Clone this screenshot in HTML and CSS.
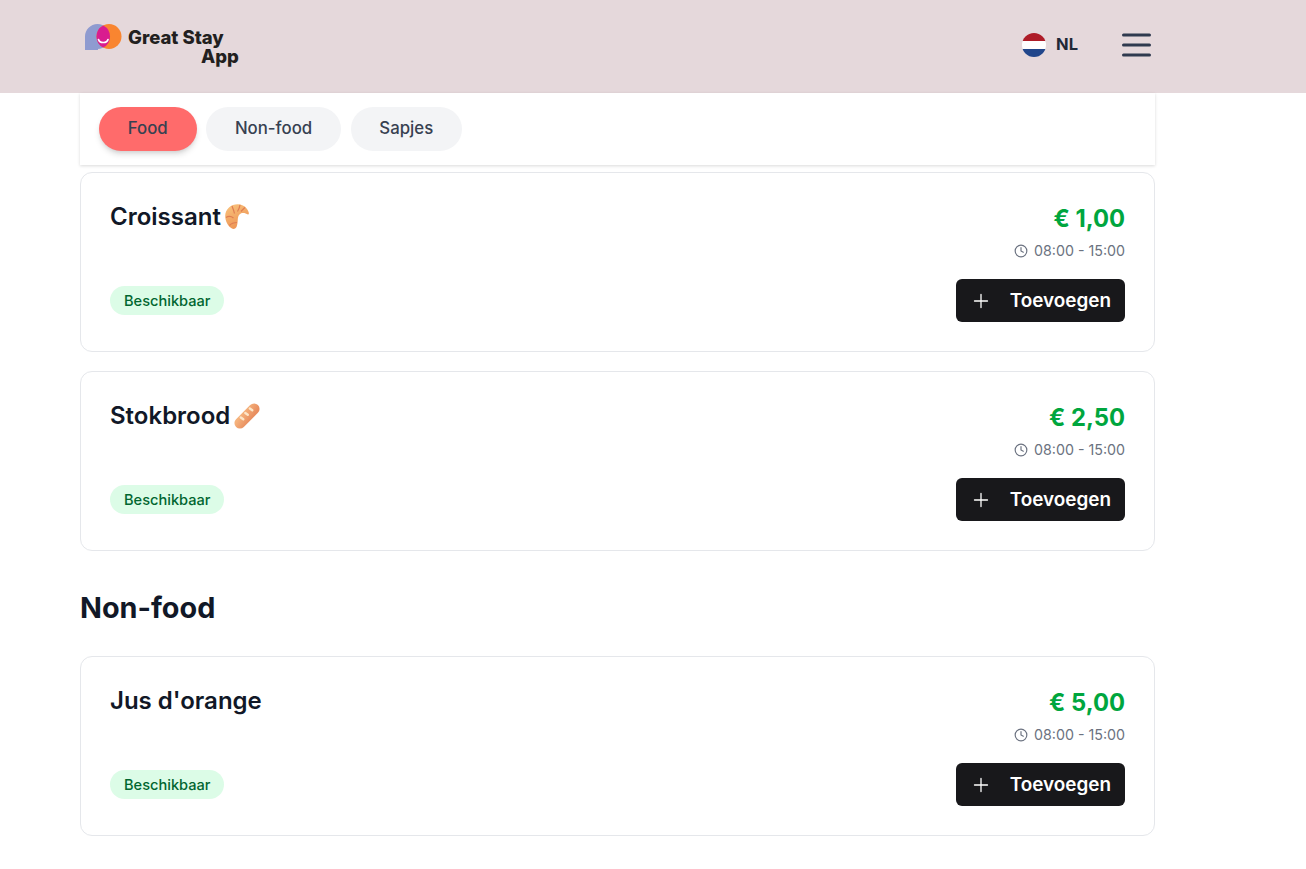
FILE: index.html
```html
<!DOCTYPE html>
<html lang="nl">
<head>
<meta charset="utf-8">
<title>Great Stay App</title>
<link rel="stylesheet" href="styles.css">
</head>
<body>
<header class="header">
  <div class="logo">
    <svg class="logo-mark" width="37" height="26" viewBox="0 0 37 26">
      <path d="M0 26V12.500C0 5.600 5.600 0 12.500 0C19.400 0 25 5.600 25 12.500C25 19.400 19.400 25 12.500 25L0 26Z" fill="#8f9bd0"/>
      <path d="M0 25H13V26H0Z" fill="#8f9bd0"/>
      <circle cx="24" cy="12.500" r="12.500" fill="#f98530"/>
      <path d="M18.250 1.400A12.500 12.500 0 0 1 18.250 23.600A12.500 12.500 0 0 1 18.250 1.400Z" fill="#d91c8f"/>
      <path d="M13.500 15.500C14.500 19.500 22 19.500 23 15.500" fill="none" stroke="#fff" stroke-width="1.700" stroke-linecap="round"/>
    </svg>
    <div class="logo-text"><span>Great Stay</span><span class="logo-app">App</span></div>
  </div>
  <div class="header-right">
    <div class="lang">
      <svg class="flag" width="24" height="24" viewBox="0 0 24 24">
        <clipPath id="flagclip"><circle cx="12" cy="12" r="12"/></clipPath>
        <g clip-path="url(#flagclip)">
          <rect width="24" height="8" fill="#ae1c28"/>
          <rect y="8" width="24" height="8" fill="#fff"/>
          <rect y="16" width="24" height="8" fill="#21468b"/>
        </g>
      </svg>
      <span class="lang-code">NL</span>
    </div>
    <svg class="burger" width="30" height="24" viewBox="0 0 30 24">
      <path d="M2.500 2H28.500M2.500 12H28.500M2.500 22H28.500" fill="none" stroke="#2f3a4f" stroke-width="3" stroke-linecap="round"/>
    </svg>
  </div>
</header>
<main class="page">
  <nav class="tabs">
    <button class="tab tab-active">Food</button>
    <button class="tab">Non-food</button>
    <button class="tab">Sapjes</button>
  </nav>
  <section class="list">
    <article class="card">
      <div class="card-top">
        <h3 class="name">Croissant
          <svg class="emoji" width="26" height="26" viewBox="0 0 26 26">
            <defs>
              <linearGradient id="crois" x1="0.200" y1="0" x2="0.700" y2="1">
                <stop offset="0" stop-color="#f9c27c"/>
                <stop offset="1" stop-color="#ec8f50"/>
              </linearGradient>
            </defs>
            <path d="M5 3.500C10 -1 19 -1 23 5C25 8 25.500 10.500 24 10.500C21 8.500 17 8 15 11C13 14 14.500 18 12.500 23C11 25.500 8.500 25.500 6.500 23.500C2 20 -2 9.500 5 3.500Z" fill="url(#crois)"/>
            <path d="M2 13.500C4.500 12 7.500 12.500 9.500 14M8 2C9 4.500 10 7 10.500 9.500M16 0.800C15.700 3 15 5 13.500 7.500M21 3.500C19.500 4.800 18.500 6 17 7.500M5.500 21.500C7 19.800 9.500 18.500 13 18.500" fill="none" stroke="#df7d52" stroke-width="1.200"/>
          </svg>
        </h3>
        <div class="meta">
          <div class="price">€ 1,00</div>
          <div class="time">
            <svg width="14" height="14" viewBox="0 0 24 24" fill="none" stroke="#6b7280" stroke-width="2" stroke-linecap="round" stroke-linejoin="round"><circle cx="12" cy="12" r="10"/><path d="M12 6v6l4 2"/></svg>
            <span>08:00 - 15:00</span>
          </div>
        </div>
      </div>
      <div class="card-bottom">
        <span class="badge">Beschikbaar</span>
        <button class="add">
          <svg width="16" height="16" viewBox="0 0 16 16"><path d="M8 1.500V14.500M1.500 8H14.500" stroke="#fff" stroke-width="1.300" stroke-linecap="round"/></svg>
          <span>Toevoegen</span>
        </button>
      </div>
    </article>
    <article class="card">
      <div class="card-top">
        <h3 class="name">Stokbrood
          <svg class="emoji" width="26" height="26" viewBox="0 0 26 26">
            <defs>
              <linearGradient id="brood" x1="0.300" y1="0.100" x2="0.700" y2="0.900">
                <stop offset="0" stop-color="#f5b27c"/>
                <stop offset="1" stop-color="#e88d5e"/>
              </linearGradient>
            </defs>
            <rect x="-2.500" y="7.500" width="31" height="11" rx="5.500" transform="rotate(-45 13 13)" fill="url(#brood)"/>
            <path d="M6.800 14.500L9.300 16.300M11.300 10L13.800 11.800M15.800 5.500L18.300 7.300" stroke="#fce6c8" stroke-width="2.400" stroke-linecap="round"/>
          </svg>
        </h3>
        <div class="meta">
          <div class="price">€ 2,50</div>
          <div class="time">
            <svg width="14" height="14" viewBox="0 0 24 24" fill="none" stroke="#6b7280" stroke-width="2" stroke-linecap="round" stroke-linejoin="round"><circle cx="12" cy="12" r="10"/><path d="M12 6v6l4 2"/></svg>
            <span>08:00 - 15:00</span>
          </div>
        </div>
      </div>
      <div class="card-bottom">
        <span class="badge">Beschikbaar</span>
        <button class="add">
          <svg width="16" height="16" viewBox="0 0 16 16"><path d="M8 1.500V14.500M1.500 8H14.500" stroke="#fff" stroke-width="1.300" stroke-linecap="round"/></svg>
          <span>Toevoegen</span>
        </button>
      </div>
    </article>
  </section>
  <h2 class="section-title">Non-food</h2>
  <section class="list">
    <article class="card">
      <div class="card-top">
        <h3 class="name">Jus d'orange</h3>
        <div class="meta">
          <div class="price">€ 5,00</div>
          <div class="time">
            <svg width="14" height="14" viewBox="0 0 24 24" fill="none" stroke="#6b7280" stroke-width="2" stroke-linecap="round" stroke-linejoin="round"><circle cx="12" cy="12" r="10"/><path d="M12 6v6l4 2"/></svg>
            <span>08:00 - 15:00</span>
          </div>
        </div>
      </div>
      <div class="card-bottom">
        <span class="badge">Beschikbaar</span>
        <button class="add">
          <svg width="16" height="16" viewBox="0 0 16 16"><path d="M8 1.500V14.500M1.500 8H14.500" stroke="#fff" stroke-width="1.300" stroke-linecap="round"/></svg>
          <span>Toevoegen</span>
        </button>
      </div>
    </article>
  </section>
</main>
</body>
</html>
```
FILE: styles.css
```css
* { box-sizing: border-box; }
html, body { margin: 0; padding: 0; }
body {
  background: #fff;
  font-family: Inter, "Liberation Sans", sans-serif;
  color: #111827;
  overflow: hidden;
  height: 869px;
}
.header {
  height: 93px;
  background: #e5d8db;
  display: flex;
  align-items: center;
  justify-content: space-between;
  padding: 0 155px 0 85px;
}
.logo { display: flex; align-items: flex-start; margin-top: -4px; }
.logo-mark { display: block; margin-top: 1px; }
.logo-text {
  display: flex;
  flex-direction: column;
  margin-left: 6px;
  font-family: Inter, sans-serif;
  font-weight: 800;
  font-size: 18.500px;
  line-height: 22px;
  color: #221f20;
  margin-top: 3px;
}
.logo-app { margin-left: 73px; margin-top: -3px; }
.header-right { display: flex; align-items: center; gap: 43px; margin-top: -3px; }
.lang { display: flex; align-items: center; gap: 10px; }
.flag { display: block; }
.lang-code { font-size: 16.500px; font-weight: 700; color: #1f2937; margin-top: -2px; }
.burger { display: block; }
.page { width: 1075px; margin-left: 80px; }
.tabs {
  height: 72px;
  background: #fff;
  display: flex;
  align-items: center;
  gap: 9.600px;
  padding: 0 19px;
  box-shadow: 0 1px 3px rgba(0,0,0,.15);
  margin-bottom: 7px;
}
.tab {
  height: 44px;
  border: 0;
  border-radius: 22px;
  font-family: inherit;
  font-size: 16.800px;
  font-weight: 500;
  color: #374151;
  background: #f3f4f6;
  padding: 0 28.800px 2px;
}
.tab-active {
  background: #ff6b6b;
  box-shadow: 0 4px 6px -1px rgba(0,0,0,.15), 0 2px 4px -2px rgba(0,0,0,.1);
}
.list { display: flex; flex-direction: column; gap: 19px; }
.card {
  height: 180px;
  border: 1px solid #e5e7eb;
  border-radius: 12px;
  padding: 29px;
  display: flex;
  flex-direction: column;
  justify-content: space-between;
}
.card-top { display: flex; justify-content: space-between; align-items: flex-start; }
.name {
  margin: 0;
  font-size: 24px;
  line-height: 30px;
  font-weight: 600;
  color: #111827;
  display: flex;
  align-items: center;
  gap: 3.500px;
}
.emoji { display: block; }
.meta { display: flex; flex-direction: column; align-items: flex-end; padding-top: 1px; }
.price { font-size: 23.800px; line-height: 32px; font-weight: 700; color: #00a63e; }
.time {
  display: flex;
  align-items: center;
  gap: 6px;
  font-size: 14.250px;
  line-height: 20px;
  color: #6b7280;
  margin-top: 6px;
}
.card-bottom { display: flex; justify-content: space-between; align-items: center; }
.badge {
  height: 29px;
  padding: 0 14px;
  border-radius: 15px;
  background: #dcfce7;
  color: #016630;
  font-size: 14.600px;
  font-weight: 500;
  display: flex;
  align-items: center;
}
.add {
  width: 169px;
  height: 43px;
  background: #18181b;
  border: 0;
  border-radius: 6px;
  color: #fff;
  font-family: inherit;
  font-size: 18.900px;
  font-weight: 600;
  display: flex;
  align-items: center;
  justify-content: space-between;
  padding: 0 14px 0 17px;
}
.add svg { display: block; }
.section-title {
  margin: 39px 0 30px;
  font-size: 28.800px;
  line-height: 36px;
  font-weight: 700;
  color: #111827;
}
```
